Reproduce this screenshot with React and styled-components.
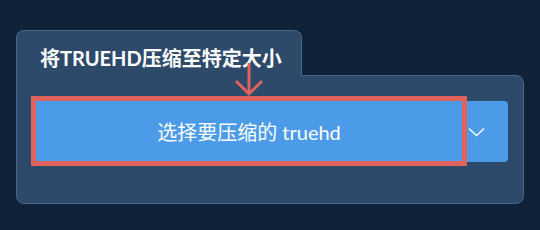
import React from "react";
import styled, {createGlobalStyle} from "styled-components";

const GlobalStyle = createGlobalStyle`
  body {
    margin: 0;
    background: #10223a;
    font-family: "Lato", "Noto Sans CJK SC", sans-serif;
  }
`;

const App = () => {
    return (
        <Page>
            <GlobalStyle/>
            <Card>
                <Tab>
                    <Title>将TRUEHD压缩至特定大小</Title>
                </Tab>
                <Panel>
                    <ButtonGroup>
                        <MainButton>
                            选择要压缩的 truehd
                            <Highlight/>
                        </MainButton>
                        <DropButton>
                            <svg width="17" height="10" viewBox="0 0 17 10" fill="none">
                                <path d="M1 1.5l7.5 7 7.5-7" stroke="#fff" strokeWidth="1.4"/>
                            </svg>
                        </DropButton>
                    </ButtonGroup>
                </Panel>
                <Arrow width="30" height="36" viewBox="0 0 30 36" fill="none">
                    <path d="M15 1v31M2 19l13 13 13-13" stroke="#e0625c" strokeWidth="3"/>
                </Arrow>
            </Card>
        </Page>
    );
};

const Page = styled.div`
  padding: 30px 16px;
`;

const Card = styled.div`
  position: relative;
  width: 508px;
`;

const Tab = styled.div`
  position: relative;
  z-index: 1;
  width: 286px;
  height: 46px;
  box-sizing: border-box;
  padding: 0 0 0 23px;
  margin-bottom: -1px;
  display: flex;
  align-items: center;
  background: #2d4a6a;
  border: 1px solid #4b6687;
  border-bottom: none;
  border-radius: 8px 8px 0 0;
`;

const Title = styled.div`
  font-size: 20px;
  font-weight: bold;
  color: #fff;
  padding-top: 7px;
  white-space: nowrap;
`;

const Panel = styled.div`
  height: 129px;
  box-sizing: border-box;
  padding: 25px 15px 0;
  background: #2d4a6a;
  border: 1px solid #4b6687;
  border-radius: 0 8px 8px 8px;
`;

const ButtonGroup = styled.div`
  display: flex;
  height: 61px;
`;

const MainButton = styled.div`
  position: relative;
  flex: 1;
  display: flex;
  align-items: center;
  justify-content: center;
  background: #4c9be8;
  color: #fff;
  font-size: 20px;
  border-radius: 4px 0 0 4px;
`;

const Highlight = styled.div`
  position: absolute;
  left: -1px;
  top: -5px;
  right: -1px;
  bottom: -4px;
  border: 5px solid #e0625c;
`;

const DropButton = styled.div`
  width: 42px;
  box-sizing: border-box;
  padding-left: 2px;
  display: flex;
  align-items: center;
  background: #4c9be8;
  border-radius: 0 4px 4px 0;
`;

const Arrow = styled.svg`
  position: absolute;
  left: 218px;
  top: 32px;
  z-index: 2;
`;

export default App;
